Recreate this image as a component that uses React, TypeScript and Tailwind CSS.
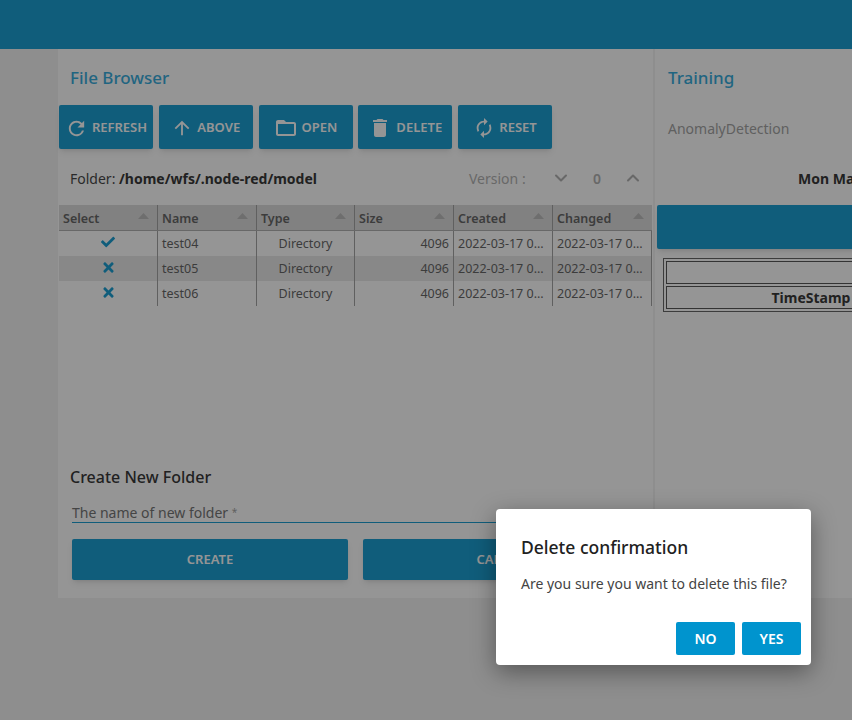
import React from 'react';
import { MdRefresh, MdArrowUpward, MdFolderOpen, MdDelete, MdAutorenew } from 'react-icons/md';
import { FaCheck, FaTimes } from 'react-icons/fa';
import { ChevronDown, ChevronUp } from 'lucide-react';

const toolbar = [
    { label: 'REFRESH', icon: <MdRefresh size={23} /> },
    { label: 'ABOVE', icon: <MdArrowUpward size={22} /> },
    { label: 'OPEN', icon: <MdFolderOpen size={24} /> },
    { label: 'DELETE', icon: <MdDelete size={24} /> },
    { label: 'RESET', icon: <MdAutorenew size={22} /> },
];

const columns = [
    { name: 'Select', w: 'w-[99px]' },
    { name: 'Name', w: 'w-[99px]' },
    { name: 'Type', w: 'w-[98px]' },
    { name: 'Size', w: 'w-[99px]' },
    { name: 'Created', w: 'w-[99px]' },
    { name: 'Changed', w: 'w-[99px]' },
];

const rows = [
    { ok: true, name: 'test04' },
    { ok: false, name: 'test05' },
    { ok: false, name: 'test06' },
];

const SortArrow = () => (
    <svg width="11" height="6" viewBox="0 0 11 6" className="mb-1.5 shrink-0 fill-[#b5b5b5]">
        <polygon points="5.5,0 11,6 0,6" />
    </svg>
);

const FileTable = () => (
    <div className="ml-px w-[593px] text-[12.5px] text-[#555]">
        <div className="flex h-[26px] border-b border-[#aaa] bg-[#d8d8d8] font-semibold">
            {columns.map((c) => (
                <div key={c.name} className={`${c.w} flex items-center justify-between border-r border-[#999] pl-1 pr-2 pt-[3px] last:border-r-0`}>
                    <span>{c.name}</span>
                    <SortArrow />
                </div>
            ))}
        </div>
        {rows.map((r, i) => (
            <div key={r.name} className={`flex h-[25px] ${i === 1 ? 'bg-[#e6e6e6]' : ''}`}>
                <div className="flex w-[99px] justify-center border-r border-[#999] pt-1 text-[#0094ce]">
                    {r.ok ? <FaCheck size={14} /> : <FaTimes size={15} />}
                </div>
                <div className="flex w-[99px] items-center border-r border-[#999] pl-1 pt-0.5">{r.name}</div>
                <div className="flex w-[98px] items-center justify-center border-r border-[#999] pt-0.5">Directory</div>
                <div className="flex w-[99px] items-center justify-end border-r border-[#999] pr-1 pt-0.5">4096</div>
                <div className="flex w-[99px] items-center border-r border-[#999] pl-1 pt-0.5">2022-03-17 0...</div>
                <div className="flex w-[99px] items-center border-r border-[#999] pl-1 pt-0.5">2022-03-17 0...</div>
            </div>
        ))}
    </div>
);

const App: React.FC = () => {
    return (
        <div className="relative h-[720px] w-[852px] overflow-hidden bg-[#f2f2f2] font-['Noto_Sans',sans-serif]">
            <div className="h-[49px] bg-[#0094ce]" />

            <div className="ml-[58px] flex h-[549px] w-[900px] gap-0.5">
                {/* file browser */}
                <div className="flex w-[595px] shrink-0 flex-col bg-white">
                    <h2 className="ml-3 mt-[18px] h-[22px] text-[17px] leading-[22px] font-medium text-[#1ea3d8]">File Browser</h2>
                    <div className="ml-px mt-[16px] flex gap-[5.75px]">
                        {toolbar.map((b) => (
                            <button key={b.label} className="flex h-[44px] w-[94px] items-center justify-center gap-1 rounded-[2px] bg-[#0094ce] pt-0.5 text-[13px] font-semibold text-white shadow-md">
                                {b.icon}
                                <span>{b.label}</span>
                            </button>
                        ))}
                    </div>
                    <div className="mt-[18px] flex h-[22px] items-center text-[14px] text-[#333]">
                        <div className="ml-3 w-[399px]">
                            Folder: <b className="font-bold text-[#222]">/home/wfs/.node-red/model</b>
                        </div>
                        <span className="w-[84px] text-[#aaa]">Version :</span>
                        <ChevronDown size={20} strokeWidth={2.5} className="-ml-0.5 text-[#aaa]" />
                        <span className="w-[52px] text-center font-semibold text-[#aaa]">0</span>
                        <ChevronUp size={20} strokeWidth={2.5} className="text-[#aaa]" />
                    </div>
                    <div className="mt-[16px]">
                        <FileTable />
                    </div>
                    <h3 className="ml-3 mt-[159px] h-[24px] text-[16px] leading-[24px] font-medium text-[#222]">Create New Folder</h3>
                    <div className="ml-[14px] mt-[15px] h-[19px] w-[568px] border-b border-[#0094ce] text-[14px] leading-[17px] text-[#666]">
                        The name of new folder <span className="align-top text-[10px] text-[#999]">*</span>
                    </div>
                    <div className="ml-[14px] mt-[16px] flex gap-[15px]">
                        <button className="h-[41px] w-[276px] rounded-[2px] bg-[#0094ce] text-[13px] font-semibold text-white shadow-md">CREATE</button>
                        <button className="h-[41px] w-[277px] rounded-[2px] bg-[#0094ce] text-[13px] font-semibold text-white shadow-md">CANCEL</button>
                    </div>
                </div>

                {/* training */}
                <div className="flex min-w-0 flex-1 flex-col bg-white">
                    <h2 className="ml-[13px] mt-[18px] h-[22px] text-[17px] leading-[22px] font-medium text-[#1ea3d8]">Training</h2>
                    <div className="ml-[13px] mt-[30px] h-[20px] text-[14px] leading-[20px] text-[#999]">AnomalyDetection</div>
                    <div className="ml-[143px] mt-[29px] h-[22px] whitespace-nowrap text-[14px] leading-[22px] font-bold text-[#222]">Mon Mar 21 2022</div>
                    <div className="ml-0.5 mt-[15px] h-[44px] rounded-[2px] bg-[#0094ce] shadow-md" />
                    <table className="ml-2 mt-[9px] w-[296px] border-separate border-spacing-0.5 border border-[#555] text-[14px]">
                        <tbody>
                            <tr>
                                <td className="h-[23px] border border-[#444]" />
                            </tr>
                            <tr>
                                <th className="h-[22px] border border-[#444] text-center font-bold text-[#222]">TimeStamp</th>
                            </tr>
                        </tbody>
                    </table>
                </div>
            </div>

            {/* backdrop + dialog */}
            <div className="absolute inset-0 bg-[rgba(33,33,33,0.48)]" />
            <div className="absolute left-[496px] top-[509px] flex h-[156px] w-[315px] flex-col rounded bg-white shadow-[0_7px_24px_rgba(0,0,0,0.4)]">
                <h2 className="ml-[25px] mt-[26px] h-[25px] text-[17.5px] leading-[25px] font-medium text-[#212121]">Delete confirmation</h2>
                <p className="ml-[25px] mt-[14px] text-[14px] leading-[20px] text-[#444]">Are you sure you want to delete this file?</p>
                <div className="mr-2.5 mt-auto mb-2.5 flex justify-end gap-[7px]">
                    <button className="h-[33px] w-[59px] rounded-[2px] bg-[#0094ce] text-[14px] font-semibold text-white">NO</button>
                    <button className="h-[33px] w-[59px] rounded-[2px] bg-[#0094ce] text-[14px] font-semibold text-white">YES</button>
                </div>
            </div>
        </div>
    );
};

export default App;
